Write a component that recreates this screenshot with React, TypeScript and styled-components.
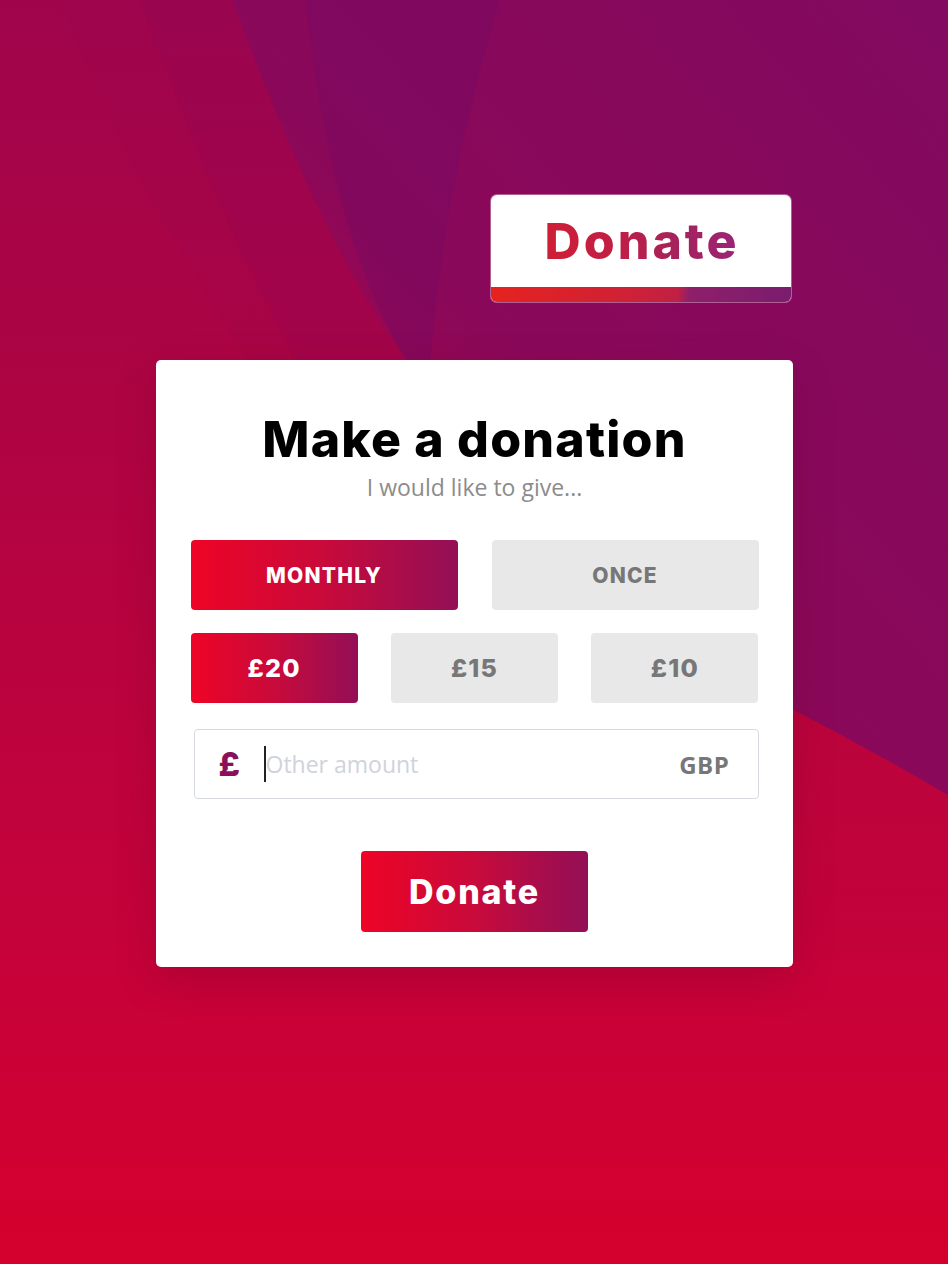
import React, { useState } from 'react';
import styled, { createGlobalStyle } from 'styled-components';

const GlobalStyle = createGlobalStyle`
  html, body {
    margin: 0;
    padding: 0;
  }
  body {
    font-family: 'Open Sans', 'Liberation Sans', sans-serif;
    background: #b0053f;
  }
  * {
    box-sizing: border-box;
  }
`;

const brandGradient = 'linear-gradient(90deg, #ee0426 0%, #c80a3b 50%, #930f56 100%)';

const Page = styled.div`
  position: relative;
  min-height: 1264px;
  overflow: hidden;
`;

const Backdrop = styled.svg`
  position: absolute;
  inset: 0;
  width: 100%;
  height: 100%;
  z-index: 0;
`;

const Column = styled.main`
  position: relative;
  z-index: 1;
  width: 637px;
  margin: 0 auto;
  padding-top: 195px;
  display: flex;
  flex-direction: column;
`;

const HeaderButton = styled.a`
  align-self: flex-end;
  margin-right: 2px;
  width: 300px;
  height: 107px;
  display: flex;
  flex-direction: column;
  background: #fff;
  border-radius: 6px;
  overflow: hidden;
  text-decoration: none;
  box-shadow: 0 0 0 1px rgba(255, 255, 255, 0.35);
  cursor: pointer;
`;

const HeaderLabel = styled.span`
  flex: 1;
  display: flex;
  align-items: center;
  justify-content: center;
  padding-left: 3px;
  font-family: Inter, 'Liberation Sans', sans-serif;
  font-weight: 800;
  font-size: 50px;
  letter-spacing: 3px;
  background: linear-gradient(90deg, #d91f2d 0%, #c21e43 40%, #a3225f 65%, #982490 100%);
  -webkit-background-clip: text;
  background-clip: text;
  color: transparent;
`;

const HeaderBar = styled.span`
  height: 15px;
  background: linear-gradient(100deg, #e6221f 0%, #cf2136 45%, #c12044 62%, #8e1f6a 66%, #7a1c6e 100%);
`;

const Card = styled.section`
  margin-top: 58px;
  background: #fff;
  border-radius: 5px;
  padding: 49px 34px 35px 35px;
  display: flex;
  flex-direction: column;
  box-shadow: 0 14px 40px rgba(90, 0, 30, 0.22);
`;

const Title = styled.h1`
  margin: 0;
  text-align: center;
  font-family: Inter, 'Liberation Sans', sans-serif;
  font-weight: 800;
  font-size: 50px;
  line-height: 60px;
  letter-spacing: 1.2px;
  color: #000;
`;

const Subtitle = styled.p`
  margin: 3px 0 0;
  text-align: center;
  font-size: 23px;
  line-height: 30px;
  font-weight: 400;
  color: #8c8c8c;
`;

const ChoiceRow = styled.div<{ $cols: number; $gap: number; $top: number }>`
  margin-top: ${(p) => p.$top}px;
  display: grid;
  grid-template-columns: repeat(${(p) => p.$cols}, 1fr);
  column-gap: ${(p) => p.$gap}px;
`;

const Choice = styled.button<{ $active: boolean; $size: number }>`
  height: 70px;
  border: none;
  border-radius: 4px;
  font-family: Inter, 'Liberation Sans', sans-serif;
  font-weight: 800;
  font-size: ${(p) => p.$size}px;
  letter-spacing: 1.2px;
  cursor: pointer;
  color: ${(p) => (p.$active ? '#fff' : '#777')};
  background: ${(p) => (p.$active ? brandGradient : '#e8e8e8')};
`;

const AmountField = styled.label`
  margin: 26px 0 0 3px;
  height: 70px;
  display: flex;
  align-items: center;
  padding: 0 28px 0 24px;
  border: 1px solid #d6d9df;
  border-radius: 4px;
  background: #fff;
`;

const Pound = styled.span`
  font-family: Inter, 'Liberation Sans', sans-serif;
  font-weight: 800;
  font-size: 33px;
  color: #8c0f5b;
  width: 45px;
`;

const Caret = styled.span`
  width: 2px;
  height: 36px;
  background: #222;
`;

const AmountInput = styled.input`
  flex: 1;
  min-width: 0;
  border: none;
  outline: none;
  padding: 0;
  font-family: 'Open Sans', 'Liberation Sans', sans-serif;
  font-size: 23px;
  color: #333;
  background: transparent;
  &::placeholder {
    color: #cfd3db;
  }
`;

const Currency = styled.span`
  font-family: 'Open Sans', 'Liberation Sans', sans-serif;
  font-weight: 700;
  font-size: 24px;
  letter-spacing: 0.6px;
  color: #777;
`;

const SubmitButton = styled.button`
  align-self: center;
  margin-top: 52px;
  width: 227px;
  height: 81px;
  border: none;
  border-radius: 4px;
  background: ${brandGradient};
  color: #fff;
  font-family: Inter, 'Liberation Sans', sans-serif;
  font-weight: 800;
  font-size: 34px;
  letter-spacing: 1.8px;
  cursor: pointer;
`;

const frequencies = ['MONTHLY', 'ONCE'];
const amounts = [20, 15, 10];

function Waves() {
  return (
    <Backdrop viewBox="0 0 948 1264" preserveAspectRatio="none" aria-hidden>
      <defs>
        <linearGradient id="base" x1="1" y1="0" x2="0.15" y2="1">
          <stop offset="0" stopColor="#820a60" />
          <stop offset="0.4" stopColor="#8b0859" />
          <stop offset="0.62" stopColor="#b6053f" />
          <stop offset="1" stopColor="#d6002c" />
        </linearGradient>
        <linearGradient id="leftFold" x1="0" y1="0" x2="0" y2="1">
          <stop offset="0" stopColor="#a0054c" />
          <stop offset="0.3" stopColor="#ad0443" />
          <stop offset="0.75" stopColor="#c6023a" />
          <stop offset="1" stopColor="#d4002e" />
        </linearGradient>
        <linearGradient id="lowFold" x1="0" y1="0" x2="0" y2="1">
          <stop offset="0" stopColor="#b5053d" />
          <stop offset="0.5" stopColor="#c3023a" />
          <stop offset="1" stopColor="#d3002f" />
        </linearGradient>
        <linearGradient id="floor" x1="0" y1="0" x2="0" y2="1">
          <stop offset="0" stopColor="#c6023a" />
          <stop offset="1" stopColor="#d5002d" />
        </linearGradient>
      </defs>
      <rect width="948" height="1264" fill="url(#base)" />
      <path d="M305 0 H500 C470 100 440 230 430 365 H410 C360 290 325 170 305 0 Z" fill="#740a65" opacity="0.4" />
      <path d="M0 0 H232 C275 115 335 265 410 365 C520 520 600 700 640 1264 H0 Z" fill="url(#leftFold)" />
      <path d="M140 0 H232 C275 115 335 265 410 365 L300 365 C235 250 185 120 140 0 Z" fill="#8f0658" opacity="0.3" />
      <path d="M60 0 H140 C185 120 235 250 300 365 L250 365 C170 240 100 110 60 0 Z" fill="#9a0550" opacity="0.2" />
      <path d="M560 600 C680 650 820 720 948 795 V1264 H560 Z" fill="url(#lowFold)" />
      <rect y="960" width="948" height="304" fill="url(#floor)" />
    </Backdrop>
  );
}

export default function App() {
  const [frequency, setFrequency] = useState('MONTHLY');
  const [amount, setAmount] = useState(20);
  const [other, setOther] = useState('');

  return (
    <Page>
      <GlobalStyle />
      <Waves />
      <Column>
        <HeaderButton>
          <HeaderLabel>Donate</HeaderLabel>
          <HeaderBar />
        </HeaderButton>

        <Card>
          <Title>Make a donation</Title>
          <Subtitle>I would like to give...</Subtitle>

          <ChoiceRow $cols={2} $gap={34} $top={38}>
            {frequencies.map((f) => (
              <Choice key={f} $size={21} $active={frequency === f} onClick={() => setFrequency(f)}>
                {f}
              </Choice>
            ))}
          </ChoiceRow>

          <ChoiceRow $cols={3} $gap={33} $top={23}>
            {amounts.map((a) => (
              <Choice key={a} $size={25} $active={amount === a} onClick={() => setAmount(a)}>
                £{a}
              </Choice>
            ))}
          </ChoiceRow>

          <AmountField>
            <Pound>£</Pound>
            <Caret />
            <AmountInput
              placeholder="Other amount"
              value={other}
              onChange={(e) => setOther(e.target.value)}
            />
            <Currency>GBP</Currency>
          </AmountField>

          <SubmitButton>Donate</SubmitButton>
        </Card>
      </Column>
    </Page>
  );
}
